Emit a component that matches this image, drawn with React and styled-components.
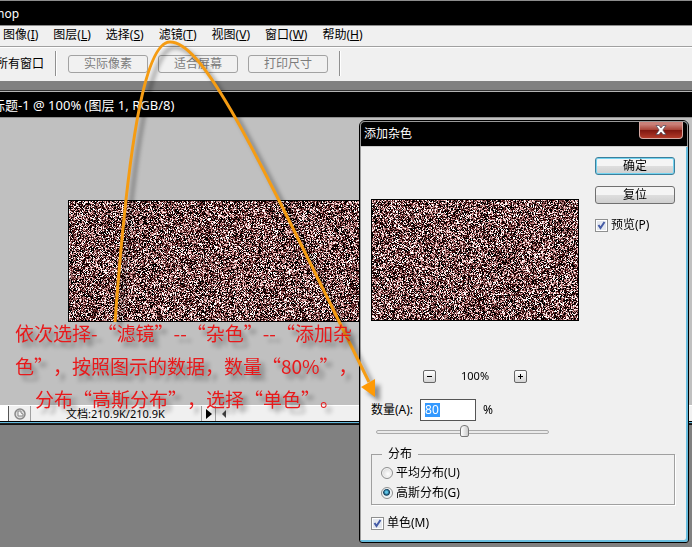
import React, { useLayoutEffect, useRef } from "react";
import styled, { createGlobalStyle, css } from "styled-components";

const Global = createGlobalStyle`
  *, *::before, *::after { box-sizing: border-box; }
  body { margin: 0; }
  body, button, input { font-family: "Noto Sans", "Noto Sans CJK SC", sans-serif; font-size: 12px; line-height: 16px; color: #000; }
`;

const Desktop = styled.div`
  position: relative;
  min-height: 100vh;
  overflow: hidden;
  background: #808080;
`;
const AppTitle = styled.header`
  height: 26px;
  padding-top: 5px;
  text-indent: -3px;
  border-top: 1px solid #8c8c8c;
  border-bottom: 1px solid #8c8c8c;
  background: #000;
  color: #fff;
`;
const MenuBar = styled.nav`
  display: flex;
  gap: 15px;
  height: 21px;
  padding: 0 3px 2px;
  background: #f0f0f0;
  border-bottom: 1px solid #a0a0a0;
`;
const MenuItem = styled.button`
  padding: 0;
  border: 0;
  background: none;
  white-space: nowrap;
`;
const OptionsBar = styled.div`
  display: flex;
  align-items: center;
  gap: 10px;
  height: 34px;
  padding-bottom: 2px;
  border-top: 1px solid #fff;
  background: #f0f0f0;
  white-space: nowrap;
  overflow: hidden;
`;
const OptionLabel = styled.span`
  margin-left: -4px;
`;
const Divider = styled.span`
  width: 2px;
  height: 25px;
  margin: 0 1px;
  border-left: 1px solid #909090;
  border-right: 1px solid #fff;
`;
const OptionButton = styled.button`
  width: 80px;
  height: 18px;
  padding: 0;
  border: 1px solid #a2a2a2;
  border-radius: 3px;
  background: #f1f1f1;
  color: #7c7c7c;
  line-height: 14px;
`;
const DocWindow = styled.section`
  margin-top: 10px;
  border-bottom: 1px solid #111;
  box-shadow: 0 -1px 0 #333;
`;
const DocTitle = styled.h1`
  height: 27px;
  margin: 0;
  padding: 5px 0 0;
  text-indent: -8px;
  border-top: 1px solid #b4b4b4;
  border-bottom: 1px solid #909090;
  background: #000;
  color: #fff;
  font-size: 13px;
  font-weight: 400;
`;
const CanvasArea = styled.div`
  height: 287px;
  padding: 82px 0 0 68px;
  overflow: hidden;
  background: #c0c0c0;
`;
const NoiseCanvas = styled.canvas`
  display: block;
  border: 1px solid #000;
`;
const StatusBar = styled.footer`
  display: flex;
  align-items: center;
  height: 16px;
  background: #f0f0f0;
  border-top: 1px solid #fff;
`;
const ZoomField = styled.input`
  width: 9px;
  height: 15px;
  padding: 0;
  border: 0;
  border-right: 1px solid #555;
  background: #fff;
`;
const StatusCell = styled.div`
  display: flex;
  align-items: center;
  justify-content: center;
  width: ${(p) => p.$width}px;
  height: 15px;
  border-right: 1px solid #a0a0a0;
  white-space: nowrap;
`;
const DocSize = styled(StatusCell)`
  justify-content: flex-start;
  padding-left: 35px;
  font-size: 11px;
`;
const Arrow = styled.button`
  display: flex;
  padding: 0;
  border: 0;
  background: none;
`;
const FrameEdge = styled.div`
  height: 3px;
  border-top: 1px solid #000;
  background: #62b9dd;
  border-bottom: 1px solid #222;
`;

const Dialog = styled.section`
  position: absolute;
  left: 359px;
  top: 120px;
  right: 3px;
  border: 1px solid #000;
  border-radius: 6px 6px 3px 3px;
  background: #f0f0f0;
  overflow: hidden;
  box-shadow: inset -2px -2px 0 #68bdde, inset 1px 0 0 #a0a0a0;
`;
const DialogTitle = styled.header`
  display: flex;
  justify-content: space-between;
  height: 26px;
  padding: 0 4px 0 3px;
  border: 1px solid #999;
  border-bottom-color: #ccc;
  border-radius: 5px 5px 0 0;
  background: #000;
  color: #fff;
`;
const DialogName = styled.h2`
  margin: 4px 0 0;
  font-size: 12px;
  font-weight: 400;
`;
const CloseButton = styled.button`
  display: flex;
  align-items: center;
  justify-content: center;
  width: 44px;
  height: 17px;
  padding: 0;
  border: 1px solid #d6aaa4;
  border-top: 0;
  border-radius: 0 0 4px 4px;
  background: linear-gradient(#c98078 0 15%, #a94438 48%, #7d1710 50%, #b23a29);
`;
const DialogBody = styled.div`
  padding: 10px 13px 9px 11px;
`;
const DialogTop = styled.div`
  display: flex;
  justify-content: space-between;
`;
const PreviewColumn = styled.div`
  padding-top: 42px;
`;
const Actions = styled.div`
  display: flex;
  flex-direction: column;
  gap: 11px;
  width: 80px;
`;
const PushButton = styled.button`
  height: 18px;
  padding: 0;
  border: 1px solid #707070;
  border-radius: 3px;
  background: linear-gradient(#f4f4f4 0 48%, #dedede 50%, #cfcfcf);
  line-height: 14px;
  ${(p) => p.$primary && css`
    border-color: #3c7f9b;
    box-shadow: inset 0 0 0 1px #73d3f0;
  `}
`;
const Choice = styled.label`
  display: flex;
  align-items: center;
  gap: 3px;
  height: 20px;
  white-space: nowrap;
`;
const Tick = styled.input`
  appearance: none;
  flex: none;
  width: 13px;
  height: 13px;
  margin: 0;
  border: 1px solid #8e8f8f;
  background: #e4e8ef;
  box-shadow: inset 0 0 0 1px #fff;
  &:checked {
    background: #e4e8ef url("data:image/svg+xml,%3Csvg xmlns='http://www.w3.org/2000/svg' viewBox='0 0 11 11'%3E%3Cpath d='M2.5 5L4.5 8L8.5 2' fill='none' stroke='%23445ba6' stroke-width='2'/%3E%3C/svg%3E") center / 11px 11px;
  }
`;
const Radio = styled.input`
  appearance: none;
  flex: none;
  width: 12px;
  height: 12px;
  margin: 0;
  border: 1px solid #8e8f8f;
  border-radius: 50%;
  background: radial-gradient(circle at 60% 60%, #fff, #ccc);
  box-shadow: inset 0 0 0 1px #f5f5f5;
  &:checked {
    background: radial-gradient(circle at 45% 42%, #5ec6e8 0 1px, #0b3a58 3px, #e8f0f4 4px);
  }
`;
const ZoomRow = styled.div`
  display: flex;
  align-items: center;
  gap: 25px;
  margin: 47px 0 0 52px;
  font-size: 11px;
`;
const SmallButton = styled.button`
  display: flex;
  align-items: center;
  justify-content: center;
  width: 13px;
  height: 13px;
  padding: 0;
  border: 1px solid #666;
  border-radius: 2px;
  background: linear-gradient(#fff, #d4d4d4);
`;
const AmountRow = styled.div`
  display: flex;
  align-items: center;
  gap: 7px;
  margin-top: 15px;
`;
const AmountField = styled.span`
  display: flex;
  align-items: center;
  width: 56px;
  height: 22px;
  padding: 3px 4px;
  border: 1px solid #555;
  background: #fff;
`;
const AmountInput = styled.input`
  width: 15px;
  height: 14px;
  padding: 0;
  border: 0;
  outline: 0;
  background: #3399ff;
  color: #fff;
  line-height: 14px;
`;
const Slider = styled.input`
  appearance: none;
  display: block;
  width: 173px;
  height: 14px;
  margin: 4px 0 0 5px;
  background: none;
  &::-webkit-slider-runnable-track {
    height: 4px;
    border: 1px solid #aaa;
    border-radius: 2px;
    background: #eaeaea;
  }
  &::-webkit-slider-thumb {
    appearance: none;
    width: 9px;
    height: 12px;
    margin-top: -6px;
    border: 1px solid #777;
    border-radius: 4px 4px 2px 2px;
    background: linear-gradient(90deg, #fff, #ccc);
  }
`;
const Group = styled.fieldset`
  margin: 7px 0 0;
  padding: 1px 9px 1px;
  border: 1px solid #a0a0a0;
  box-shadow: 1px 1px 0 #fff;
`;
const Legend = styled.legend`
  margin-left: 1px;
  padding: 0 6px;
`;
const BottomChoice = styled.div`
  margin-top: 8px;
`;

const Overlay = styled.div`
  position: absolute;
  inset: 0;
  pointer-events: none;
`;
const Note = styled.p`
  position: absolute;
  left: 15px;
  top: 316px;
  margin: 0;
  color: #e8191b;
  font-family: "Noto Sans CJK SC", sans-serif;
  font-size: 19px;
  font-weight: 400;
  line-height: 33px;
  white-space: nowrap;
  text-spacing-trim: space-all;
  text-shadow: 5px 5px 4px rgba(0, 0, 0, 0.4);
`;
const NoteLine = styled.span`
  display: block;
  padding-left: ${(p) => (p.$indent ? 20 : 0)}px;
`;
const ArrowDrawing = styled.svg`
  position: absolute;
  left: 0;
  top: 0;
  filter: drop-shadow(5px 5px 2px rgba(0, 0, 0, 0.4));
`;

function Noise({ width, height, seed, label }) {
  const ref = useRef(null);
  useLayoutEffect(() => {
    const ctx = ref.current.getContext("2d");
    const image = ctx.createImageData(width, height);
    let state = seed;
    const random = () => {
      state = (state + 0x6d2b79f5) | 0;
      let t = Math.imul(state ^ (state >>> 15), 1 | state);
      t = (t + Math.imul(t ^ (t >>> 7), 61 | t)) ^ t;
      return ((t ^ (t >>> 14)) >>> 0) / 4294967296;
    };
    for (let i = 0; i < image.data.length; i += 4) {
      const g = Math.sqrt(-2 * Math.log(random() + 1e-9)) * Math.cos(6.2832 * random()) * 150;
      image.data[i] = 122 + g;
      image.data[i + 1] = 68 + g;
      image.data[i + 2] = 68 + g;
      image.data[i + 3] = 255;
    }
    ctx.putImageData(image, 0, 0);
  }, [width, height, seed]);
  return <NoiseCanvas ref={ref} width={width} height={height} role="img" aria-label={label} />;
}

const menus = [["图像", "I"], ["图层", "L"], ["选择", "S"], ["滤镜", "T"], ["视图", "V"], ["窗口", "W"], ["帮助", "H"]];

export default function App() {
  return (
    <Desktop lang="zh-CN">
      <Global />
      <AppTitle>hop</AppTitle>
      <MenuBar>
        {menus.map(([name, key]) => <MenuItem key={key}>{name}(<u>{key}</u>)</MenuItem>)}
      </MenuBar>
      <OptionsBar>
        <OptionLabel>所有窗口</OptionLabel>
        <Divider />
        <OptionButton disabled>实际像素</OptionButton>
        <OptionButton disabled>适合屏幕</OptionButton>
        <OptionButton disabled>打印尺寸</OptionButton>
        <Divider />
      </OptionsBar>
      <DocWindow>
        <DocTitle>标题-1 @ 100% (图层 1, RGB/8)</DocTitle>
        <CanvasArea><Noise width={400} height={120} seed={7} label="图层 1" /></CanvasArea>
        <StatusBar>
          <ZoomField aria-label="缩放" />
          <StatusCell $width={22}>
            <svg width="12" height="12" viewBox="0 0 12 12">
              <circle cx="6" cy="6" r="5" fill="#ddd" stroke="#888" strokeWidth="1.5" />
              <path d="M4 3v5h5V6L7 5V3z" fill="#f5f5f5" stroke="#888" />
            </svg>
          </StatusCell>
          <DocSize $width={171}>文档:210.9K/210.9K</DocSize>
          <StatusCell $width={14}>
            <Arrow aria-label="菜单"><svg width="6" height="10"><path d="M0 0l6 5-6 5z" /></svg></Arrow>
          </StatusCell>
          <Arrow aria-label="向左滚动">
            <svg width="16" height="8"><path d="M10 0L6 4l4 4z" fill="#444" /></svg>
          </Arrow>
        </StatusBar>
        <FrameEdge />
      </DocWindow>

      <Dialog role="dialog" aria-label="添加杂色">
        <DialogTitle>
          <DialogName>添加杂色</DialogName>
          <CloseButton aria-label="关闭">
            <svg width="12" height="10" viewBox="0 0 12 10">
              <path d="M1 .5h3L6 3 8 .5h3L7.8 5 11 9.500H8L6 7 4 9.500H1L4.200 5z" fill="#fff" stroke="#4b4b5c" strokeWidth=".7" />
            </svg>
          </CloseButton>
        </DialogTitle>
        <DialogBody>
          <DialogTop>
            <PreviewColumn><Noise width={206} height={120} seed={91} label="预览" /></PreviewColumn>
            <Actions>
              <PushButton $primary>确定</PushButton>
              <PushButton>复位</PushButton>
              <Choice><Tick type="checkbox" defaultChecked />预览(P)</Choice>
            </Actions>
          </DialogTop>
          <ZoomRow>
            <SmallButton aria-label="缩小"><svg width="7" height="7"><path d="M1 3.500h5" stroke="#000" /></svg></SmallButton>
            <span>100%</span>
            <SmallButton aria-label="放大"><svg width="7" height="7"><path d="M1 3.500h5M3.500 1v5" stroke="#000" /></svg></SmallButton>
          </ZoomRow>
          <AmountRow>
            <label htmlFor="amount">数量(A):</label>
            <AmountField><AmountInput id="amount" defaultValue="80" /></AmountField>
            <span>%</span>
          </AmountRow>
          <Slider type="range" min="0" max="100" defaultValue="51" aria-label="数量" />
          <Group>
            <Legend>分布</Legend>
            <Choice><Radio type="radio" name="spread" />平均分布(U)</Choice>
            <Choice><Radio type="radio" name="spread" defaultChecked />高斯分布(G)</Choice>
          </Group>
          <BottomChoice><Choice><Tick type="checkbox" defaultChecked />单色(M)</Choice></BottomChoice>
        </DialogBody>
      </Dialog>

      <Overlay>
        <ArrowDrawing width="692" height="547" viewBox="0 0 692 547">
          <path d="M115 322C127 160 143 42 170 42C205 42 258 158 369 382" fill="none" stroke="#f59c13" strokeWidth="3" />
          <path d="M361 387L375 379L375 397z" fill="#ff9a05" />
        </ArrowDrawing>
        <Note>
          <NoteLine>依次选择-“滤镜”--“杂色”--“添加杂</NoteLine>
          <NoteLine>色”，按照图示的数据，数量“80%”，</NoteLine>
          <NoteLine $indent>分布“高斯分布”，选择“单色”。</NoteLine>
        </Note>
      </Overlay>
    </Desktop>
  );
}
